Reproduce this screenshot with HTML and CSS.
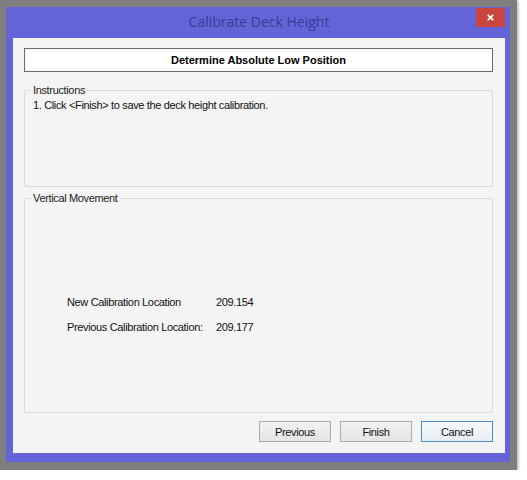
FILE: index.html
```html
<!DOCTYPE html>
<html lang="en">
<head>
    <meta charset="UTF-8">
    <title>Calibrate Deck Height</title>
    <link rel="stylesheet" href="styles.css">
</head>
<body>
    <div class="shot">
        <div class="window">
            <div class="titlebar">
                <span></span>
                <div class="title">Calibrate Deck Height</div>
                <button class="close" aria-label="Close">
                    <svg viewBox="0 0 10 10">
                        <path d="M2 2l6 6M8 2l-6 6"></path>
                    </svg>
                </button>
            </div>

            <div class="content">
                <div class="step-header">Determine Absolute Low Position</div>

                <fieldset class="group">
                    <legend>Instructions</legend>
                    <div class="instructions">1. Click &lt;Finish&gt; to save the deck height calibration.</div>
                </fieldset>

                <fieldset class="group group-movement">
                    <legend>Vertical Movement</legend>
                    <div class="movement">
                        <div class="readout">
                            <span>New Calibration Location</span>
                            <span>209.154</span>
                            <span>Previous Calibration Location:</span>
                            <span>209.177</span>
                        </div>
                    </div>
                </fieldset>

                <div class="buttons">
                    <button class="btn">Previous</button>
                    <button class="btn">Finish</button>
                    <button class="btn btn-default">Cancel</button>
                </div>
            </div>
        </div>
    </div>
</body>
</html>
```

FILE: styles.css
```css
* {
    margin: 0;
    padding: 0;
    box-sizing: border-box;
}

body {
    background: #ffffff;
    font-family: "Liberation Sans", Arial, sans-serif;
    font-size: 11px;
    letter-spacing: -0.35px;
    color: #111;
}

.shot {
    width: 517px;
    height: 470px;
    padding: 7px 7px 8px 6px;
    background: #7e7e7e;
    box-shadow: 1px 1px 3px rgba(0, 0, 0, 0.35);
}

.window {
    width: 504px;
    height: 455px;
    background: #6464d8;
    padding: 0 5px 9px 7px;
    display: flex;
    flex-direction: column;
}

.titlebar {
    height: 31px;
    display: grid;
    grid-template-columns: 1fr auto 1fr;
    align-items: start;
}

.title {
    font-family: "Open Sans", "Noto Sans", sans-serif;
    font-size: 14px;
    letter-spacing: 0;
    color: #3a3a92;
    line-height: 20px;
    padding-top: 5px;
}

.close {
    justify-self: end;
    width: 29px;
    height: 19px;
    margin-top: 1px;
    background: #c9463e;
    border: none;
    display: flex;
    align-items: center;
    justify-content: center;
}

.close svg {
    width: 9px;
    height: 9px;
    fill: none;
    stroke: #ffffff;
    stroke-width: 2;
}

.content {
    flex: 1;
    background: #f4f4f4;
    padding: 10px 12px 0 11px;
    display: flex;
    flex-direction: column;
}

.step-header {
    height: 24px;
    background: #ffffff;
    border: 1px solid #6a6a6a;
    text-align: center;
    font-weight: bold;
    letter-spacing: 0;
    line-height: 22px;
    color: #000;
}

.group {
    margin-top: 12px;
    border: 1px solid #d9d9d9;
    border-radius: 2px;
    padding: 2px 8px 0 6px;
}

.group legend {
    line-height: 13px;
    padding: 0 2px;
    color: #222;
}

.instructions {
    height: 87px;
    line-height: 13px;
    padding-left: 2px;
}

.group-movement {
    margin-top: 5px;
    padding-top: 0;
}

.movement {
    height: 207px;
    padding: 91px 0 0 36px;
}

.readout {
    display: grid;
    grid-template-columns: 149px auto;
    row-gap: 12px;
    line-height: 13px;
}

.buttons {
    margin-top: 8px;
    display: flex;
    justify-content: flex-end;
    gap: 9px;
}

.btn {
    width: 72px;
    height: 21px;
    font-family: "Liberation Sans", Arial, sans-serif;
    font-size: 11px;
    letter-spacing: -0.35px;
    color: #111;
    background: linear-gradient(#f2f2f2, #e4e4e4);
    border: 1px solid #acacac;
}

.btn-default {
    border-color: #4c8fcf;
    background: linear-gradient(#f6f9fc, #e9eef3);
}
```
